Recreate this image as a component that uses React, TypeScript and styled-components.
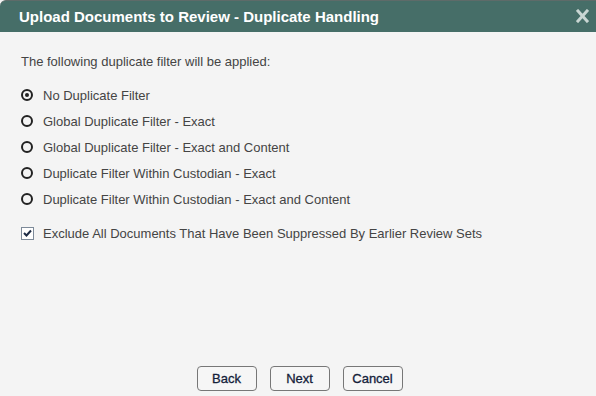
import styled, { createGlobalStyle } from "styled-components";
import { useState } from "react";

const GlobalStyle = createGlobalStyle`
  html, body {
    margin: 0;
    padding: 0;
    background: #f4f4f4;
  }
  * {
    box-sizing: border-box;
  }
`;

const Dialog = styled.div`
  width: 596px;
  height: 396px;
  display: flex;
  flex-direction: column;
  background: #f4f4f4;
  font-family: "Liberation Sans", Arial, sans-serif;
  color: #444;
`;

const Header = styled.div`
  height: 32px;
  flex-shrink: 0;
  display: flex;
  align-items: center;
  justify-content: space-between;
  padding: 0 6px 1px 19px;
  background: #466e68;
  border-top: 1px solid #5e6b69;
  border-top-left-radius: 6px;
`;

const Title = styled.h1`
  margin: 0;
  font-size: 15px;
  font-weight: bold;
  color: #fff;
`;

const Close = styled.button`
  border: none;
  background: transparent;
  padding: 0;
  width: 16px;
  height: 16px;
  display: flex;
  align-items: center;
  justify-content: center;
  cursor: pointer;
`;

const Content = styled.div`
  flex: 1;
  padding: 22px 20px 0 21px;
  font-size: 13px;
`;

const Intro = styled.p`
  margin: 0 0 13px;
`;

const Options = styled.div`
  display: flex;
  flex-direction: column;
`;

const Row = styled.label`
  height: 26px;
  display: flex;
  align-items: center;
  gap: 10px;
  cursor: pointer;
`;

const CheckRow = styled(Row)`
  margin-top: 8px;
  gap: 9px;
`;

const RadioDot = styled.span<{ $on: boolean }>`
  width: 12px;
  height: 12px;
  border-radius: 50%;
  border: 2px solid #222;
  display: flex;
  align-items: center;
  justify-content: center;
  &::after {
    content: "";
    width: 4px;
    height: 4px;
    border-radius: 50%;
    background: #222;
    display: ${(p) => (p.$on ? "block" : "none")};
  }
`;

const Box = styled.span`
  width: 13px;
  height: 13px;
  border: 1px solid #7d8a99;
  background: #fff;
  display: flex;
  align-items: center;
  justify-content: center;
`;

const Footer = styled.div`
  display: flex;
  justify-content: center;
  gap: 13px;
  padding: 0 0 5px 3px;
`;

const Button = styled.button`
  width: 60px;
  height: 25px;
  border: 1px solid #777;
  border-radius: 4px;
  background: #f6f6f6;
  font-family: "Liberation Sans", Arial, sans-serif;
  font-size: 13px;
  font-weight: normal;
  color: #14213a;
  -webkit-text-stroke: 0.3px #14213a;
  cursor: pointer;
`;

const filters = [
  "No Duplicate Filter",
  "Global Duplicate Filter - Exact",
  "Global Duplicate Filter - Exact and Content",
  "Duplicate Filter Within Custodian - Exact",
  "Duplicate Filter Within Custodian - Exact and Content",
];

export default function App() {
  const [selected, setSelected] = useState(0);
  const [exclude, setExclude] = useState(true);

  return (
    <>
      <GlobalStyle />
      <Dialog>
        <Header>
          <Title>Upload Documents to Review - Duplicate Handling</Title>
          <Close aria-label="Close">
            <svg width="13" height="14" viewBox="0 0 13 14">
              <path
                d="M2 2 L11 12 M11 2 L2 12"
                stroke="#c9d6d3"
                strokeWidth="3"
                strokeLinecap="square"
              />
            </svg>
          </Close>
        </Header>
        <Content>
          <Intro>The following duplicate filter will be applied:</Intro>
          <Options>
            {filters.map((f, i) => (
              <Row key={f} onClick={() => setSelected(i)}>
                <RadioDot $on={selected === i} />
                {f}
              </Row>
            ))}
            <CheckRow onClick={() => setExclude(!exclude)}>
              <Box>
                {exclude && (
                  <svg width="9" height="8" viewBox="0 0 9 8">
                    <path
                      d="M1 4 L3.5 6.5 L8 1.5"
                      stroke="#1d2b44"
                      strokeWidth="2"
                      fill="none"
                    />
                  </svg>
                )}
              </Box>
              Exclude All Documents That Have Been Suppressed By Earlier Review Sets
            </CheckRow>
          </Options>
        </Content>
        <Footer>
          <Button>Back</Button>
          <Button>Next</Button>
          <Button>Cancel</Button>
        </Footer>
      </Dialog>
    </>
  );
}
